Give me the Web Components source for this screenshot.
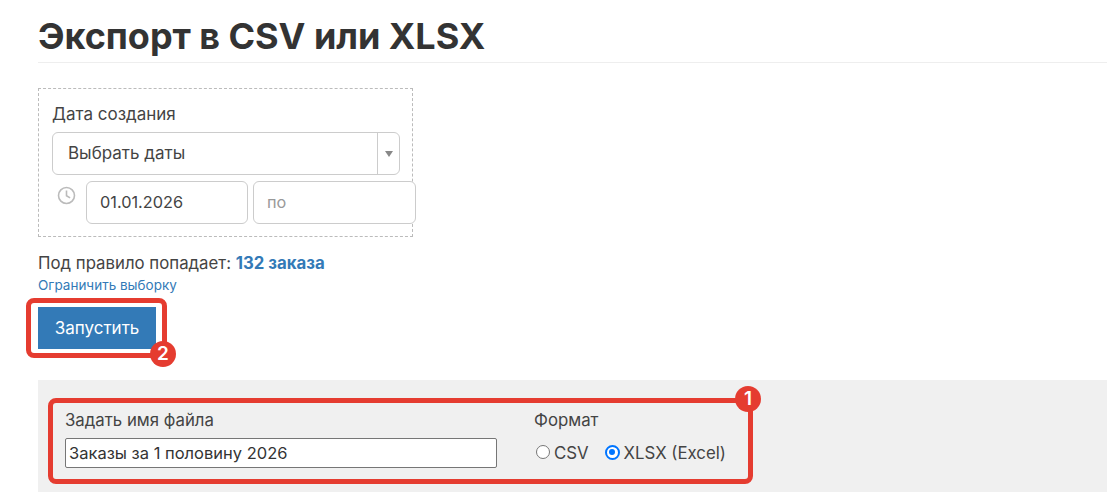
<!DOCTYPE html>
<html lang="ru">
<head>
<meta charset="utf-8">
<title>Экспорт</title>
<style>
  html, body { margin: 0; background: #fff; }
  body { font-family: Inter, "Noto Sans", sans-serif; color: #333; overflow: hidden; height: 492px; }
</style>
</head>
<body>
<export-page></export-page>

<script>
const base = `
  * { box-sizing: border-box; }
`;

// red frame with numbered badge, drawn over the thing it marks
class NoteFrame extends HTMLElement {
  constructor() {
    super();
    const root = this.attachShadow({ mode: 'open' });
    root.innerHTML = `<style>${base}
      :host { display: block; position: relative; }
      .frame { position: absolute; border: 5px solid #e53c30; border-radius: 8px; pointer-events: none;
        top: var(--t); left: var(--l); right: var(--r); bottom: var(--b); }
      .num { position: absolute; width: 26px; height: 26px; border-radius: 50%; background: #e53c30; color: #fff;
        font: 600 19px/26px Inter, sans-serif; text-align: center;
        right: var(--nr); top: var(--nt); bottom: var(--nb); }
    </style>
    <slot></slot>
    <div class="frame"></div>
    <div class="num">${this.getAttribute('num')}</div>`;
  }
}
customElements.define('note-frame', NoteFrame);

class DateFilter extends HTMLElement {
  constructor() {
    super();
    const root = this.attachShadow({ mode: 'open' });
    root.innerHTML = `<style>${base}
      :host { display: block; width: 375px; height: 149px; border: 1px dashed #bbb; padding: 14px 13px 0; }
      .label { font-size: 17px; line-height: 22px; height: 29px; color: #444; }
      .select { display: flex; width: 348px; height: 43px; border: 1px solid #ccc; border-radius: 6px; background: #fff; }
      .select span { flex: 1; padding-left: 15px; font-size: 17px; line-height: 41px; color: #444; }
      .arrow { width: 22px; border-left: 1px solid #ccc; display: flex; align-items: center; justify-content: center; }
      .arrow i { border: 4px solid transparent; border-top: 6px solid #888; border-bottom: 0; }
      .dates { display: flex; margin-top: 6px; }
      .clock { width: 34px; padding: 5px 0 0 5px; flex: none; }
      .clock svg { display: block; }
      .field { width: 162px; height: 43px; border: 1px solid #ccc; border-radius: 6px; padding-left: 13px;
        font-size: 16.3px; line-height: 41px; color: #444; background: #fff; flex: none; }
      .field + .field { width: 163px; margin-left: 5px; color: #999; }
    </style>
    <div class="label">Дата создания</div>
    <div class="select"><span>Выбрать даты</span><div class="arrow"><i></i></div></div>
    <div class="dates">
      <div class="clock"><svg width="19" height="19" viewBox="0 0 19 19" fill="none" stroke="#bbb" stroke-width="1.6">
        <circle cx="9.5" cy="9.5" r="8"/><path d="M9.5 4.5v5.2l3.6 2.2"/></svg></div>
      <div class="field">01.01.2026</div>
      <div class="field">по</div>
    </div>`;
  }
}
customElements.define('date-filter', DateFilter);

class ExportSettings extends HTMLElement {
  constructor() {
    super();
    const root = this.attachShadow({ mode: 'open' });
    root.innerHTML = `<style>${base}
      :host { display: block; background: #f0f0f0; height: 112px; padding: 18px 0 0 10px; }
      .inner { display: flex; padding: 10px 17px 0; width: 704px; height: 86px; }
      .name { width: 469px; }
      .label { font-size: 16.8px; line-height: 24px; height: 30px; color: #444; }
      .input { width: 432px; height: 30px; border: 1px solid #767676; border-radius: 2px; background: #fff;
        padding-left: 3px; font-size: 16.5px; line-height: 28px; color: #333; }
      .radios { display: flex; align-items: center; height: 30px; font-size: 16.8px; color: #444; }
      .radio { width: 14px; height: 14px; border: 1px solid #767676; border-radius: 50%; background: #fff; margin: 0 4px 0 2px; flex: none; position: relative; top: -1px; }
      .radio.on { width: 15px; height: 15px; border: 2px solid #0075ff; padding: 2.5px; margin-left: 16px; margin-right: 4px; }
      .radio.on::after { content: ""; display: block; width: 6px; height: 6px; border-radius: 50%; background: #0075ff; }
    </style>
    <note-frame num="1" style="--t:0;--l:0;--r:-1px;--b:0;--nr:-9px;--nt:-12px;--nb:auto;width:704px">
      <div class="inner">
        <div class="name">
          <div class="label">Задать имя файла</div>
          <div class="input">Заказы за 1 половину 2026</div>
        </div>
        <div>
          <div class="label">Формат</div>
          <div class="radios"><span class="radio"></span>CSV<span class="radio on"></span>XLSX (Excel)</div>
        </div>
      </div>
    </note-frame>`;
  }
}
customElements.define('export-settings', ExportSettings);

class ExportPage extends HTMLElement {
  constructor() {
    super();
    const root = this.attachShadow({ mode: 'open' });
    root.innerHTML = `<style>${base}
      :host { display: block; padding: 11px 0 0 38px; }
      h1 { margin: 0; font-size: 36px; font-weight: 700; line-height: 50px; height: 52px; color: #333; border-bottom: 1px solid #eee; letter-spacing: -0.05px; }
      date-filter { margin-top: 25px; }
      .count { margin-top: 15px; font-size: 16.8px; line-height: 22px; color: #444; }
      .count b { color: #337ab7; font-weight: 700; }
      a { display: block; font-size: 13.5px; line-height: 22px; height: 22px; color: #337ab7; text-decoration: none; }
      .run { width: 118px; margin-top: 11px; }
      button { display: block; width: 118px; height: 42px; border: 0; background: #337ab7; color: #fff; font: 17px Inter, sans-serif; padding: 0; }
      export-settings { margin-top: 31px; }
    </style>
    <h1>Экспорт в CSV или XLSX</h1>
    <date-filter></date-filter>
    <div class="count">Под правило попадает: <b>132 заказа</b></div>
    <a href="#">Ограничить выборку</a>
    <note-frame class="run" num="2" style="--t:-9px;--l:-12px;--r:-11px;--b:-9px;--nr:-20px;--nt:auto;--nb:-18px">
      <button>Запустить</button>
    </note-frame>
    <export-settings></export-settings>`;
  }
}
customElements.define('export-page', ExportPage);
</script>
</body>
</html>
